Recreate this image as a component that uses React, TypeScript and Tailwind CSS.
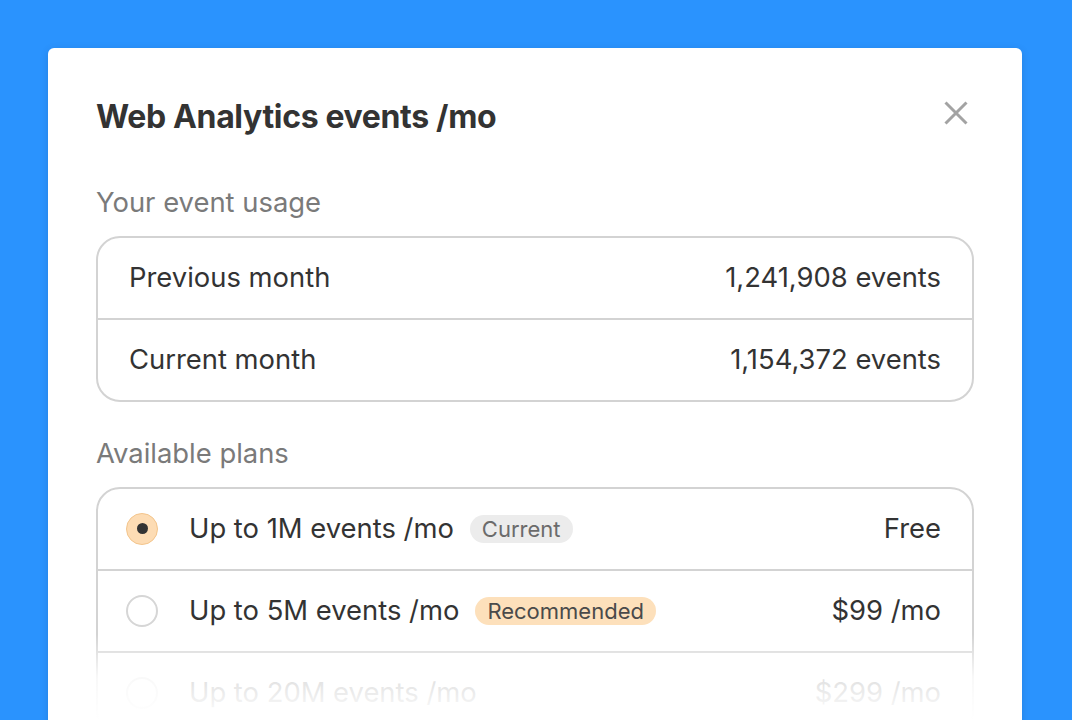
import React from "react";

const font = { fontFamily: "Inter, 'Noto Sans', sans-serif" };

function Radio({ checked }: { checked?: boolean }) {
  if (checked) {
    return (
      <span className="flex h-8 w-8 shrink-0 items-center justify-center rounded-full border border-[#f3c58c] bg-[#fddcb4]">
        <span className="h-[11px] w-[11px] rounded-full bg-[#333333]" />
      </span>
    );
  }
  return <span className="h-8 w-8 shrink-0 rounded-full border-2 border-[#d6d6d6] bg-white" />;
}

export default function App() {
  const plans = [
    { label: "Up to 1M events /mo", badge: "Current", badgeCls: "bg-[#ececec] text-[#6b6b6b]", price: "Free", checked: true },
    { label: "Up to 5M events /mo", badge: "Recommended", badgeCls: "bg-[#fde0bb] text-[#4a4a4a]", price: "$99 /mo" },
    { label: "Up to 20M events /mo", price: "$299 /mo" },
  ];
  return (
    <div className="relative h-[720px] w-full overflow-hidden bg-[#2a93fe]" style={font}>
      <div className="ml-12 mr-[50px] mt-12 rounded-[6px] bg-white px-12 pt-12 pb-12 shadow-[0_2px_8px_rgba(0,0,0,0.12)]">
        <div className="flex items-center justify-between">
          <h1 className="text-[32px] leading-[42px] font-bold text-[#333333] tracking-[-0.35px]">Web Analytics events /mo</h1>
          <svg width="24" height="24" viewBox="0 0 24 24" className="mr-[6px] -mt-[8px]" fill="none" stroke="#a3a3a3" strokeWidth="3" strokeLinecap="butt">
            <path d="M1.5 1.5L22.5 22.5M22.5 1.5L1.5 22.5" />
          </svg>
        </div>

        <div className="mt-12 text-[27.4px] leading-8 text-[#7a7a7a]">Your event usage</div>
        <div className="mt-[18px] rounded-[24px] border-2 border-[#d3d3d3] text-[27.4px] text-[#333333]">
          <div className="flex h-20 items-center justify-between px-[31px]">
            <span>Previous month</span>
            <span>1,241,908 events</span>
          </div>
          <div className="h-[2px] bg-[#d3d3d3]" />
          <div className="flex h-20 items-center justify-between px-[31px]">
            <span>Current month</span>
            <span>1,154,372 events</span>
          </div>
        </div>

        <div className="mt-[35px] text-[27.4px] leading-8 text-[#7a7a7a]">Available plans</div>
        <div className="mt-[18px] rounded-[24px] border-2 border-[#d3d3d3] text-[27.4px] text-[#333333]">
          {plans.map((p, i) => (
            <div key={i}>
              {i > 0 && <div className="h-[2px] bg-[#d3d3d3]" />}
              <div className="flex h-20 items-center justify-between pl-[28px] pr-[31px]">
                <div className="flex items-center">
                  <Radio checked={p.checked} />
                  <span className="ml-[31px]">{p.label}</span>
                  {p.badge && (
                    <span className={`ml-[16px] rounded-full px-3 text-[22px] leading-[28px] ${p.badgeCls}`}>{p.badge}</span>
                  )}
                </div>
                <span>{p.price}</span>
              </div>
            </div>
          ))}
        </div>
      </div>
      <div className="pointer-events-none absolute bottom-0 left-12 right-[50px] h-[86px] bg-gradient-to-b from-white/0 via-white/85 to-white" />
    </div>
  );
}
